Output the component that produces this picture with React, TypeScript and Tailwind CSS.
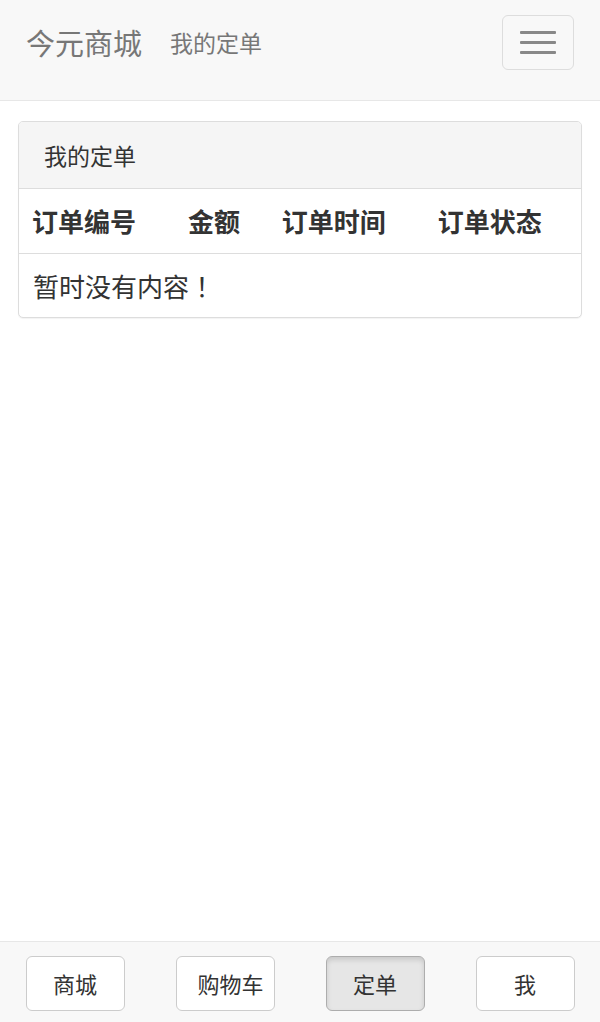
import { useState } from 'react';

const FONT = '"Noto Sans CJK SC", "Noto Sans", "Liberation Sans", sans-serif';

interface TabItem {
  label: string;
  key: string;
}

const tabs: TabItem[] = [
  { label: '商城', key: 'shop' },
  { label: '购物车', key: 'cart' },
  { label: '定单', key: 'orders' },
  { label: '我', key: 'me' },
];

const columns = ['订单编号', '金额', '订单时间', '订单状态'];

/* ─── Top navbar ─── */
const Navbar = () => (
  <nav className="h-[101px] bg-[#f8f8f8] border-b border-[#e7e7e7]">
    <div className="h-[84px] flex items-center pl-[26px] pr-[26px]">
      <span className="text-[29px] leading-none text-[#777]">今元商城</span>
      <span className="ml-[28px] text-[23px] leading-none text-[#777]">我的定单</span>
      <button
        className="ml-auto w-[72px] h-[55px] rounded-[6px] border border-[#ddd] flex flex-col items-center justify-center gap-[7px]"
        aria-label="Toggle navigation"
      >
        <span className="block w-[36px] h-[3px] rounded-[1px] bg-[#888]" />
        <span className="block w-[36px] h-[3px] rounded-[1px] bg-[#888]" />
        <span className="block w-[36px] h-[3px] rounded-[1px] bg-[#888]" />
      </button>
    </div>
  </nav>
);

/* ─── Orders panel ─── */
const OrdersPanel = () => (
  <div className="mx-[18px] mt-[20px] rounded-[5px] border border-[#ddd] bg-white shadow-[0_1px_1px_rgba(0,0,0,0.05)] overflow-hidden">
    <div className="h-[67px] flex items-center px-[25px] bg-[#f5f5f5] border-b border-[#ddd] text-[23px] text-[#333]">
      我的定单
    </div>
    <table className="w-full text-[#333]">
      <thead>
        <tr className="border-b border-[#ddd]">
          {columns.map((c) => (
            <th key={c} className="h-[64px] px-[13px] text-left align-middle text-[26px] font-bold whitespace-nowrap">
              {c}
            </th>
          ))}
        </tr>
      </thead>
      <tbody>
        <tr>
          <td colSpan={4} className="h-[64px] px-[14px] align-middle text-[26px]">
            暂时没有内容
            <span style={{ fontFamily: '"Noto Sans CJK JP", sans-serif' }}>！</span>
          </td>
        </tr>
      </tbody>
    </table>
  </div>
);

/* ─── Bottom tab bar ─── */
const TabBar = () => {
  const [active, setActive] = useState('orders');
  return (
    <footer className="h-[81px] bg-[#f8f8f8] border-t border-[#e7e7e7] pt-[14px] grid grid-cols-4">
      {tabs.map((t) => (
        <div key={t.key} className="flex justify-center">
          <button
            onClick={() => setActive(t.key)}
            className={
              active === t.key
                ? 'w-[99px] h-[55px] px-[21px] rounded-[6px] border border-[#adadad] bg-[#e6e6e6] shadow-[inset_0_3px_5px_rgba(0,0,0,0.125)] text-[22px] text-[#333] text-center whitespace-nowrap'
                : 'w-[99px] h-[55px] px-[21px] rounded-[6px] border border-[#ccc] bg-white text-[22px] text-[#333] text-center whitespace-nowrap'
            }
          >
            {t.label}
          </button>
        </div>
      ))}
    </footer>
  );
};

export default function App() {
  return (
    <div className="min-h-screen flex flex-col bg-white" style={{ fontFamily: FONT }}>
      <Navbar />
      <main className="flex-1">
        <OrdersPanel />
      </main>
      <TabBar />
    </div>
  );
}
